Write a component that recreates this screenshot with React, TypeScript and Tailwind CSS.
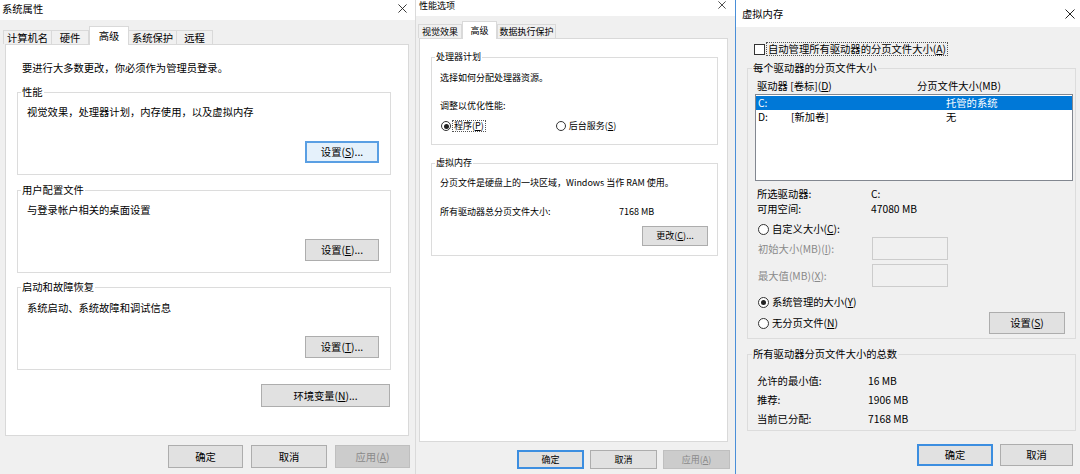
import React from "react";

function CloseX({ className }: { className: string }) {
  return (
    <svg className={className} viewBox="0 0 10 10" fill="none">
      <path d="M0.5 0.5L9.5 9.5M9.5 0.5L0.5 9.5" stroke="#222" strokeWidth="1" />
    </svg>
  );
}

type V = "normal" | "focus" | "def" | "disabled";
function Btn({ children, className = "", v = "normal" }: { children: React.ReactNode; className?: string; v?: V }) {
  const vc =
    v === "focus"
      ? "border-2 border-[#5a9fe3] bg-[#e5f1fb]"
      : v === "def"
      ? "border-2 border-[#3c8ee0] bg-[#e1e1e1]"
      : v === "disabled"
      ? "border border-[#bfbfbf] bg-[#cccccc] text-[#8a8a8a]"
      : "border border-[#adadad] bg-[#e1e1e1]";
  return <div className={"flex items-center justify-center shrink-0 " + vc + " " + className}>{children}</div>;
}

function Group({ legend, className = "", legendCls = "", children }: { legend: string; className?: string; legendCls?: string; children: React.ReactNode }) {
  return (
    <fieldset className={"border border-[#dcdcdc] min-w-0 flex flex-col " + className}>
      <legend className={"px-[1px] " + legendCls}>{legend}</legend>
      {children}
    </fieldset>
  );
}

function Radio({ checked, className = "" }: { checked?: boolean; className?: string }) {
  return (
    <div className={"rounded-full border border-[#333] bg-white flex items-center justify-center shrink-0 " + className}>
      {checked ? <div className="w-[5px] h-[5px] rounded-full bg-[#222]" /> : null}
    </div>
  );
}

function Tab({ children, className = "", selected }: { children: React.ReactNode; className?: string; selected?: boolean }) {
  return (
    <div
      className={
        "flex items-center justify-center shrink-0 border border-b-0 " +
        (selected ? "bg-white border-[#d9d9d9] relative z-10 -mb-px " : "bg-[#f0f0f0] border-[#d9d9d9] ") +
        className
      }
    >
      {children}
    </div>
  );
}

function Panel1() {
  return (
    <div className="w-[415px] h-[474px] shrink-0 bg-[#f0f0f0] flex flex-col text-[10.3px]">
      <div className="h-[20px] bg-white flex items-center justify-between pl-[2px] pr-[8px]">
        <span className="leading-[14px] -mt-[3px]">系统属性</span>
        <CloseX className="w-[9px] h-[9px] -mt-[4px]" />
      </div>
      <div className="h-[24px] flex items-end pl-[3px]">
        <Tab className="w-[49px] h-[14px]">计算机名</Tab>
        <Tab className="w-[37px] h-[14px] border-l-0">硬件</Tab>
        <Tab className="w-[40px] h-[19px]" selected>高级</Tab>
        <Tab className="w-[48px] h-[14px] border-l-0">系统保护</Tab>
        <Tab className="w-[36px] h-[14px] border-l-0">远程</Tab>
      </div>
      <div className="ml-[5px] w-[404px] h-[392px] bg-white border border-[#d9d9d9] flex flex-col pl-[11px]">
        <div className="mt-[16px] pl-[5px] h-[14px] leading-[14px]">要进行大多数更改，你必须作为管理员登录。</div>
        <Group legend="性能" className="mt-[10px] w-[374px] h-[90px]" legendCls="ml-[3px] h-[14px] leading-[14px]">
          <div className="mt-[6px] pl-[9px] h-[14px] leading-[14px]">视觉效果，处理器计划，内存使用，以及虚拟内存</div>
          <div className="mt-[22px] flex justify-end pr-[11px]">
            <Btn v="focus" className="w-[74px] h-[22px]">设置(<u>S</u>)...</Btn>
          </div>
        </Group>
        <Group legend="用户配置文件" className="mt-[8px] w-[374px] h-[90px]" legendCls="ml-[3px] h-[14px] leading-[14px]">
          <div className="mt-[6px] pl-[9px] h-[14px] leading-[14px]">与登录帐户相关的桌面设置</div>
          <div className="mt-[22px] flex justify-end pr-[11px]">
            <Btn className="w-[74px] h-[22px]">设置(<u>E</u>)...</Btn>
          </div>
        </Group>
        <Group legend="启动和故障恢复" className="mt-[7px] w-[374px] h-[90px]" legendCls="ml-[3px] h-[14px] leading-[14px]">
          <div className="mt-[7px] pl-[9px] h-[14px] leading-[14px]">系统启动、系统故障和调试信息</div>
          <div className="mt-[21px] flex justify-end pr-[11px]">
            <Btn className="w-[74px] h-[22px]">设置(<u>T</u>)...</Btn>
          </div>
        </Group>
        <div className="mt-[14px] w-[374px] flex justify-end pr-[1px]">
          <Btn className="w-[129px] h-[23px]">环境变量(<u>N</u>)...</Btn>
        </div>
      </div>
      <div className="mt-[9px] flex justify-end gap-[8px] pr-[5px]">
        <Btn className="w-[75px] h-[23px]">确定</Btn>
        <Btn className="w-[76px] h-[23px]">取消</Btn>
        <Btn v="disabled" className="w-[75px] h-[23px]">应用(<u>A</u>)</Btn>
      </div>
    </div>
  );
}

function Panel2() {
  return (
    <div className="w-[320px] h-[474px] shrink-0 bg-[#f0f0f0] border-l border-[#dadada] flex flex-col text-[9px]">
      <div className="h-[16px] bg-white flex items-start justify-between pl-[3px] pr-[9px]">
        <span className="leading-[12px]">性能选项</span>
        <CloseX className="w-[8px] h-[8px] mt-[1px]" />
      </div>
      <div className="h-[22px] flex items-end pl-[2px]">
        <Tab className="w-[44px] h-[14px]">视觉效果</Tab>
        <Tab className="w-[35px] h-[18px]" selected>高级</Tab>
        <Tab className="w-[59px] h-[14px]">数据执行保护</Tab>
      </div>
      <div className="ml-[3px] w-[309px] h-[404px] bg-white border border-[#d9d9d9] flex flex-col pl-[11px]">
        <Group legend="处理器计划" className="mt-[12px] w-[287px] h-[94px]" legendCls="ml-[3px] h-[12px] leading-[12px]">
          <div className="mt-[9px] pl-[8px] h-[12px] leading-[12px]">选择如何分配处理器资源。</div>
          <div className="mt-[16px] pl-[8px] h-[12px] leading-[12px]">调整以优化性能:</div>
          <div className="mt-[8px] pl-[9px] h-[12px] flex items-center">
            <Radio checked className="w-[10px] h-[10px]" />
            <span className="ml-[1px] px-[1px] h-[12px] leading-[10px] border border-dotted border-[#555]">程序(<u>P</u>)</span>
            <Radio className="w-[10px] h-[10px] ml-[70px]" />
            <span className="ml-[2px] px-[1px] leading-[12px]">后台服务(<u>S</u>)</span>
          </div>
        </Group>
        <Group legend="虚拟内存" className="mt-[12px] w-[287px] h-[99px]" legendCls="ml-[3px] h-[12px] leading-[12px]">
          <div className="mt-[8px] pl-[8px] h-[12px] leading-[12px]">分页文件是硬盘上的一块区域，Windows 当作 RAM 使用。</div>
          <div className="mt-[17px] pl-[8px] h-[12px] leading-[12px] flex">
            <span className="w-[179px] shrink-0">所有驱动器总分页文件大小:</span>
            <span>7168 MB</span>
          </div>
          <div className="mt-[8px] flex justify-end pr-[9px]">
            <Btn className="w-[66px] h-[20px]">更改(<u>C</u>)...</Btn>
          </div>
        </Group>
      </div>
      <div className="mt-[8px] flex justify-end gap-[6px] pr-[5px]">
        <Btn v="def" className="w-[67px] h-[19px]">确定</Btn>
        <Btn className="w-[67px] h-[19px]">取消</Btn>
        <Btn v="disabled" className="w-[67px] h-[19px]">应用(<u>A</u>)</Btn>
      </div>
    </div>
  );
}

function Panel3() {
  return (
    <div className="w-[345px] h-[474px] shrink-0 bg-[#f0f0f0] border-l border-[#4a8fd8] flex flex-col text-[10.3px]">
      <div className="h-[27px] bg-white flex items-center justify-between pl-[6px] pr-[5px]">
        <span className="leading-[14px]">虚拟内存</span>
        <CloseX className="w-[10px] h-[10px]" />
      </div>
      <div className="flex flex-col pl-[11px] pr-[4px]">
        <div className="mt-[15px] h-[14px] flex items-center pl-[7px]">
          <div className="w-[11px] h-[11px] border border-[#333] bg-white shrink-0" />
          <span className="ml-[1px] px-[1px] h-[14px] leading-[12px] border border-dotted border-[#555]">
            自动管理所有驱动器的分页文件大小(<u>A</u>)
          </span>
        </div>
        <Group legend="每个驱动器的分页文件大小" className="mt-[5px] w-[329px] h-[278px]" legendCls="ml-[4px] h-[14px] leading-[14px]">
          <div className="mt-[4px] h-[14px] leading-[14px] pl-[9px] flex">
            <span className="w-[160px] shrink-0">驱动器 [卷标](<u>D</u>)</span>
            <span>分页文件大小(MB)</span>
          </div>
          <div className="mt-[1px] ml-[7px] w-[318px] h-[87px] border border-[#828790] bg-white pt-[1px] flex flex-col">
            <div className="h-[14px] leading-[14px] bg-[#0078d7] text-white flex pl-[2px]">
              <span className="w-[188px] shrink-0">C:</span>
              <span>托管的系统</span>
            </div>
            <div className="h-[14px] leading-[14px] flex pl-[2px]">
              <span className="w-[33px] shrink-0">D:</span>
              <span className="w-[155px] shrink-0">[新加卷]</span>
              <span>无</span>
            </div>
          </div>
          <div className="mt-[5px] pl-[9px] h-[15px] leading-[15px] flex">
            <span className="w-[114px] shrink-0">所选驱动器:</span>
            <span>C:</span>
          </div>
          <div className="pl-[9px] h-[15px] leading-[15px] flex">
            <span className="w-[114px] shrink-0">可用空间:</span>
            <span>47080 MB</span>
          </div>
          <div className="mt-[6px] pl-[10px] h-[14px] flex items-center">
            <Radio className="w-[11px] h-[11px]" />
            <span className="ml-[3px] leading-[14px]">自定义大小(<u>C</u>):</span>
          </div>
          <div className="mt-[1px] pl-[10px] h-[23px] flex items-center text-[#8a8a8a]">
            <span className="w-[114px] shrink-0">初始大小(MB)(<u>I</u>):</span>
            <div className="w-[76px] h-[23px] border border-[#cccccc] bg-[#f0f0f0]" />
          </div>
          <div className="mt-[4px] pl-[10px] h-[23px] flex items-center text-[#8a8a8a]">
            <span className="w-[114px] shrink-0">最大值(MB)(<u>X</u>):</span>
            <div className="w-[76px] h-[23px] border border-[#cccccc] bg-[#f0f0f0]" />
          </div>
          <div className="mt-[8px] pl-[10px] h-[14px] flex items-center">
            <Radio checked className="w-[11px] h-[11px]" />
            <span className="ml-[3px] leading-[14px]">系统管理的大小(<u>Y</u>)</span>
          </div>
          <div className="mt-[3px] pl-[10px] pr-[10px] h-[22px] flex items-center justify-between">
            <div className="flex items-center">
              <Radio className="w-[11px] h-[11px]" />
              <span className="ml-[3px] leading-[14px]">无分页文件(<u>N</u>)</span>
            </div>
            <Btn className="w-[76px] h-[22px]">设置(<u>S</u>)</Btn>
          </div>
        </Group>
        <Group legend="所有驱动器分页文件大小的总数" className="mt-[8px] w-[329px] h-[84px]" legendCls="ml-[4px] h-[14px] leading-[14px]">
          <div className="mt-[10px] pl-[9px] h-[19px] leading-[19px] flex">
            <span className="w-[111px] shrink-0">允许的最小值:</span>
            <span>16 MB</span>
          </div>
          <div className="pl-[9px] h-[19px] leading-[19px] flex">
            <span className="w-[111px] shrink-0">推荐:</span>
            <span>1906 MB</span>
          </div>
          <div className="pl-[9px] h-[19px] leading-[19px] flex">
            <span className="w-[111px] shrink-0">当前已分配:</span>
            <span>7168 MB</span>
          </div>
        </Group>
        <div className="mt-[13px] flex justify-end gap-[7px] pr-[3px]">
          <Btn v="def" className="w-[76px] h-[22px]">确定</Btn>
          <Btn className="w-[73px] h-[22px]">取消</Btn>
        </div>
      </div>
    </div>
  );
}

export default function App() {
  return (
    <div className="w-[1080px] h-[474px] overflow-hidden flex bg-[#f0f0f0] text-black font-['Noto_Sans_CJK_SC','Noto_Sans',sans-serif]">
      <Panel1 />
      <Panel2 />
      <Panel3 />
    </div>
  );
}
